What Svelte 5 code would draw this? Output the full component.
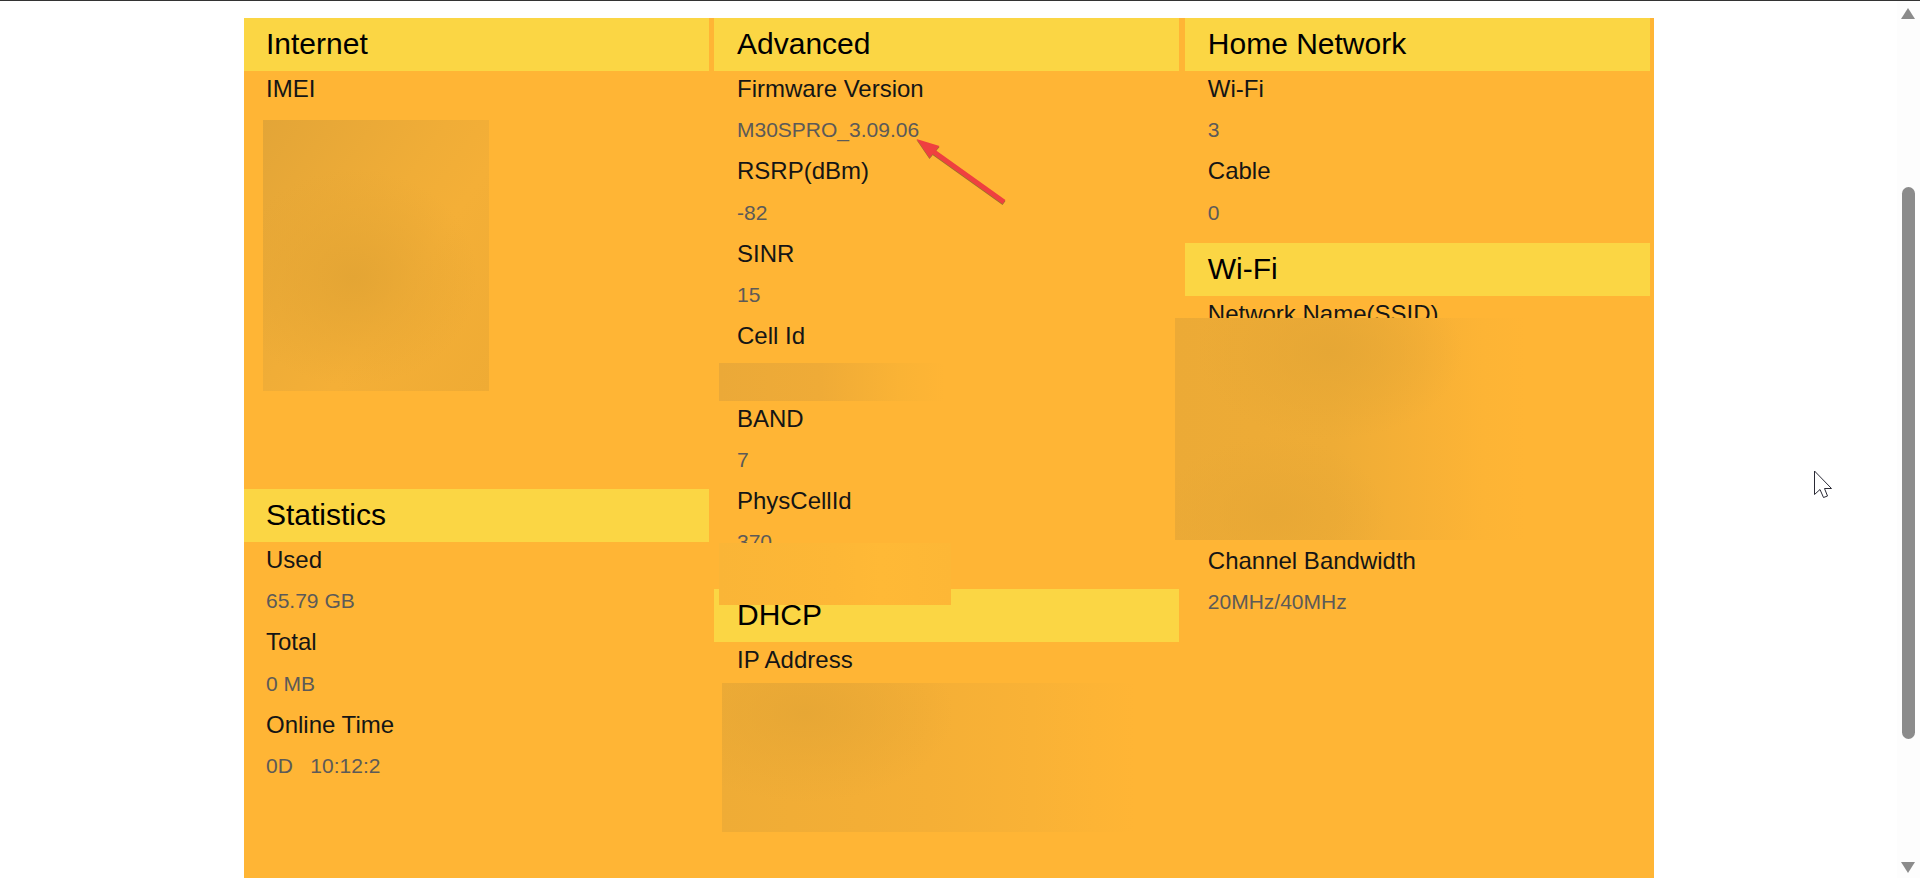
<script>
	const columns = [
		[
			{ title: 'Internet', rows: [['IMEI', null]], filler: 335.6 },
			{
				title: 'Statistics',
				rows: [
					['Used', '65.79 GB'],
					['Total', '0 MB'],
					['Online Time', '0D\u00a0\u00a0\u00a010:12:2']
				]
			}
		],
		[
			{
				title: 'Advanced',
				rows: [
					['Firmware Version', 'M30SPRO_3.09.06'],
					['RSRP(dBm)', '-82'],
					['SINR', '15'],
					['Cell Id', null],
					['BAND', '7'],
					['PhysCellId', '370']
				],
				filler: 24
			},
			{ title: 'DHCP', rows: [['IP Address', null]] }
		],
		[
			{
				title: 'Home Network',
				rows: [
					['Wi-Fi', '3'],
					['Cable', '0']
				],
				filler: 7
			},
			{
				title: 'Wi-Fi',
				rows: [['Network Name(SSID)', null]],
				filler: 165,
				after: [['Channel Bandwidth', '20MHz/40MHz']]
			}
		]
	];
</script>

<div class="page">
	<main class="main">
		<div class="panel">
			{#each columns as sections}
				<div class="col">
					{#each sections as s}
						<section>
							<h2>{s.title}</h2>
							{#each s.rows as [label, value]}
								<div class="row label">{label}</div>
								<div class="row value">{value ?? ''}</div>
							{/each}
							{#if s.filler}
								<div style="height: {s.filler}px"></div>
							{/if}
							{#each s.after ?? [] as [label, value]}
								<div class="row label">{label}</div>
								<div class="row value">{value}</div>
							{/each}
						</section>
					{/each}
				</div>
			{/each}

			<!-- redacted patches sit over the text -->
			<div class="blur b-imei"></div>
			<div class="blur b-cell"></div>
			<div class="blur b-wifi"></div>
			<div class="blur b-phys"></div>
			<div class="blur b-ip"></div>

			<svg class="arrow" width="110" height="80" viewBox="0 0 110 80">
				<path d="M90 65 L20 15" stroke="#ef4040" stroke-width="5" stroke-linecap="butt" fill="none" />
				<path d="M2.5 2 L25.5 9 L15.5 21 Z" fill="#ef4040" />
			</svg>
		</div>
	</main>

	<aside class="scrollbar">
		<span class="up"></span>
		<span class="thumb"></span>
		<span class="down"></span>
	</aside>

	<svg class="cursor" width="20" height="30" viewBox="0 0 20 30">
		<path
			d="M1.5 1 V24.5 L7 19.5 L10.5 27.5 L14.5 26 L11.5 18.5 L18.5 18.5 Z"
			fill="#fff"
			stroke="#2a2a35"
			stroke-width="1"
		/>
	</svg>
</div>

<style>
	:global(body) {
		margin: 0;
		overflow: hidden;
		background: #fff;
		font-family: 'Liberation Sans', Arial, sans-serif;
	}
	.page {
		position: relative;
		display: flex;
		height: 878px;
		overflow: hidden;
		border-top: 1px solid #333;
		box-sizing: border-box;
	}
	.main {
		flex: 1;
		padding-top: 17px;
		overflow: hidden;
	}
	.panel {
		position: relative;
		width: 1410px;
		height: 860px;
		margin: 0 auto;
		box-sizing: border-box;
		padding-right: 4px;
		display: grid;
		grid-template-columns: repeat(3, 465px);
		column-gap: 5.5px;
		background: #ffb535;
	}
	.col {
		--indent: 23px;
	}
	.col:first-child {
		--indent: 22.5px;
	}
	.col:nth-child(3) {
		--indent: 23.3px;
	}
	h2 {
		margin: 0;
		height: 53px;
		line-height: 52px;
		padding-left: var(--indent);
		font-size: 30px;
		font-weight: 400;
		color: #000;
		background: #fbd644;
	}
	.row {
		height: 41.2px;
		line-height: 36px;
		padding-left: var(--indent);
	}
	.label {
		font-size: 24px;
		color: #151515;
	}
	.value {
		font-size: 21px;
		color: #5c5a58;
	}
	.blur {
		position: absolute;
	}
	.b-imei {
		left: 19px;
		top: 102px;
		width: 226px;
		height: 271px;
		background:
			radial-gradient(ellipse 55% 40% at 40% 58%, #e4a534 0%, rgba(228, 165, 52, 0) 100%),
			linear-gradient(125deg, #e3a537 0%, #f0ad37 45%, #f4af37 62%, #efab34 100%);
	}
	.b-cell {
		left: 475px;
		top: 345px;
		width: 226px;
		height: 38px;
		background: linear-gradient(90deg, #eba938 0%, #efab37 45%, #fab335 80%, #ffb535 100%);
	}
	.b-wifi {
		left: 931px;
		top: 300px;
		width: 350px;
		height: 222px;
		background:
			radial-gradient(ellipse 38% 40% at 44% 15%, #e6a735 0%, rgba(230, 167, 53, 0) 100%),
			radial-gradient(ellipse 32% 35% at 28% 88%, #e8a835 0%, rgba(232, 168, 53, 0) 100%),
			linear-gradient(90deg, #ecaa36 0%, #eeac36 45%, #f6b036 68%, #fdb435 88%, #ffb535 100%);
	}
	.b-phys {
		left: 475px;
		top: 525px;
		width: 232px;
		height: 62px;
		background: linear-gradient(90deg, #fab537 0%, #fdb736 50%, #ffb936 70%, #fdb736 100%);
	}
	.b-ip {
		left: 478px;
		top: 665px;
		width: 413px;
		height: 149px;
		background:
			radial-gradient(ellipse 36% 60% at 20% 20%, #e7a735 0%, rgba(231, 167, 53, 0) 100%),
			linear-gradient(90deg, #efac36 0%, #f5af36 50%, #f9b236 75%, #fdb435 90%, #ffb535 100%);
	}
	.arrow {
		position: absolute;
		left: 670px;
		top: 119px;
		overflow: visible;
		filter: drop-shadow(0.5px 1px 0.5px rgba(90, 70, 30, 0.6));
	}
	.scrollbar {
		position: relative;
		width: 23px;
		background: #fdfdfd;
		flex: none;
	}
	.up,
	.down {
		position: absolute;
		left: 4px;
		width: 0;
		height: 0;
		border-left: 7.5px solid transparent;
		border-right: 7.5px solid transparent;
	}
	.up {
		top: 7px;
		border-bottom: 11px solid #8b8b8b;
	}
	.down {
		bottom: 5px;
		border-top: 11px solid #8b8b8b;
	}
	.thumb {
		position: absolute;
		left: 5px;
		top: 186px;
		width: 13px;
		height: 552px;
		border-radius: 7px;
		background: #8b8b8b;
	}
	.cursor {
		position: absolute;
		left: 1813px;
		top: 469px;
	}
</style>
